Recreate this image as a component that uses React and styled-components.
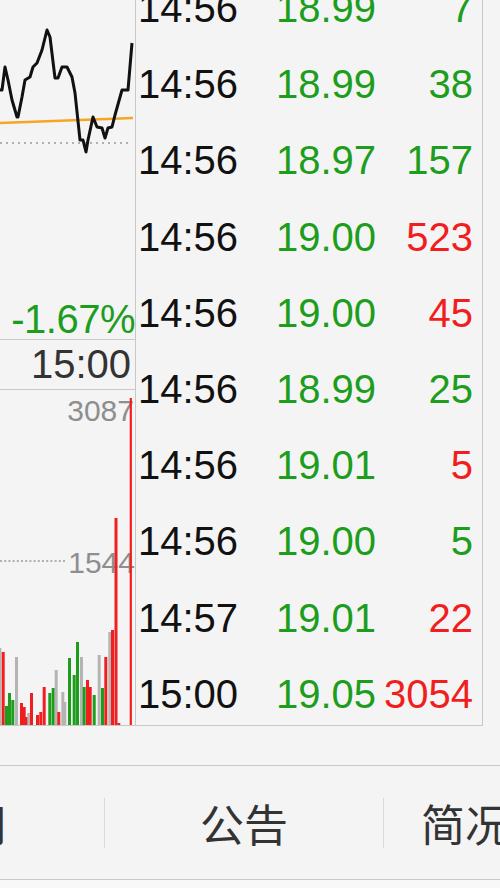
import styled, { createGlobalStyle } from "styled-components";

const pageBg = "#f4f4f4";
const rule = "#c8c8c8";
const green = "#1c9d1c";
const red = "#f01e1e";
const axisGrey = "#8e8e8e";

const GlobalStyle = createGlobalStyle`
  html, body {
    margin: 0;
    padding: 0;
    background: ${pageBg};
    overflow: hidden;
  }
  body {
    font-family: "Liberation Sans", Arial, sans-serif;
  }
`;

const Page = styled.div`
  width: 500px;
  height: 888px;
  overflow: hidden;
  background: ${pageBg};
  display: flex;
  flex-direction: column;
`;

const Quote = styled.div`
  display: flex;
  flex-shrink: 0;
  width: 483px;
  height: 756px;
  margin-top: -30px;
  box-sizing: border-box;
  border-bottom: 1px solid ${rule};
`;

const ChartColumn = styled.div`
  width: 136px;
  flex-shrink: 0;
  box-sizing: border-box;
  border-right: 1px solid ${rule};
  display: flex;
  flex-direction: column;
`;

const PriceChart = styled.svg`
  display: block;
  width: 135px;
  height: 330px;
  flex-shrink: 0;
`;

const PctLabel = styled.div`
  height: 39px;
  line-height: 39px;
  font-size: 40px;
  text-align: right;
  color: ${green};
  white-space: nowrap;
  letter-spacing: -0.5px;
`;

const TimeAxis = styled.div`
  height: 51px;
  box-sizing: border-box;
  border-top: 1px solid ${rule};
  border-bottom: 1px solid ${rule};
  font-size: 40px;
  line-height: 49px;
  color: #333;
  text-align: right;
  padding-right: 4px;
`;

const VolumeChart = styled.svg`
  display: block;
  width: 135px;
  flex: 1;
`;

const TradeList = styled.div`
  flex: 1;
  box-sizing: border-box;
  border-right: 1px solid ${rule};
  overflow: hidden;
`;

const TradeRow = styled.div`
  height: 76.2px;
  display: grid;
  grid-template-columns: 138px 1fr auto;
  align-items: center;
  padding: 0 9px 0 2px;
  font-size: 40px;
  line-height: 1;
`;

const Time = styled.span`
  color: #111;
`;

const Price = styled.span`
  color: ${green};
`;

const Volume = styled.span`
  text-align: right;
  color: ${(p) => (p.$up ? red : green)};
`;

const TabBar = styled.div`
  display: flex;
  align-items: center;
  flex-shrink: 0;
  margin-top: 39px;
  margin-left: -179px;
  height: 115px;
  box-sizing: border-box;
  border-top: 1px solid ${rule};
  border-bottom: 1px solid ${rule};
  font-family: "Noto Sans CJK SC", "Liberation Sans", sans-serif;
  font-size: 44px;
  color: #333;
`;

const Tab = styled.div`
  width: ${(p) => p.$width || 278}px;
  flex-shrink: 0;
  display: flex;
  align-items: center;
  justify-content: ${(p) => (p.$start ? "flex-start" : "center")};
  padding-left: ${(p) => (p.$start ? "37px" : "0")};
  box-sizing: border-box;
  white-space: nowrap;
`;

const TabDivider = styled.div`
  width: 1px;
  height: 50px;
  flex-shrink: 0;
  background: #dadada;
`;

const Footer = styled.div`
  flex: 1;
  background: #f8f8f8;
`;

const pricePoints = [
  [0, 120], [2, 120], [5, 97], [8, 110], [12, 130], [17, 147], [18, 147],
  [22, 127], [25, 110], [30, 107], [33, 97], [37, 93], [42, 80], [47, 60],
  [50, 67], [55, 108], [58, 108], [62, 97], [67, 97], [72, 107], [75, 123],
  [80, 170], [83, 170], [86, 182], [88, 170], [93, 147], [97, 157],
  [102, 158], [105, 168], [108, 158], [112, 157], [115, 145], [122, 120],
  [128, 120], [132, 73],
];

// x, top of bar (page y), colour key, optional width
const volumeBars = [
  [0, 648, "k", 1.3], [1.7, 652, "r"], [5, 706, "g"], [8, 693, "g"],
  [11.3, 700, "g"], [15, 657, "k"], [20, 703, "r"], [22.7, 707, "r"],
  [25, 717, "r"], [27.3, 713, "k"], [30, 693, "r"], [36, 715, "r"],
  [39.3, 712, "r"], [42.7, 687, "r"], [48.3, 693, "g"], [51.7, 688, "g"],
  [54.7, 670, "k"], [57.3, 712, "r"], [61.3, 692, "k"], [63.3, 702, "k"],
  [68, 658, "g"], [72.7, 675, "g"], [76, 642, "g"], [80, 657, "k"],
  [82.7, 687, "g"], [86, 680, "r"], [88.7, 687, "r"], [92.7, 695, "g"],
  [97.7, 655, "k"], [101, 688, "g"], [104.3, 657, "r"], [108.3, 632, "k"],
  [111, 630, "r"], [114.5, 518, "r"], [117.3, 723, "r"], [129.7, 398, "r", 2.2],
];

const barColour = { r: red, g: green, k: "#b4b4b4" };

const trades = [
  ["14:56", "18.99", "7", false],
  ["14:56", "18.99", "38", false],
  ["14:56", "18.97", "157", false],
  ["14:56", "19.00", "523", true],
  ["14:56", "19.00", "45", true],
  ["14:56", "18.99", "25", false],
  ["14:56", "19.01", "5", true],
  ["14:56", "19.00", "5", false],
  ["14:57", "19.01", "22", true],
  ["15:00", "19.05", "3054", true],
];

function App() {
  return (
    <Page>
      <GlobalStyle />
      <Quote>
        <ChartColumn>
          <PriceChart viewBox="0 0 135 330">
            <line x1="0" y1="173" x2="132" y2="173" stroke="#b0b0b0" strokeWidth="2" strokeDasharray="2 4" />
            <line x1="0" y1="153" x2="133" y2="148" stroke="#f5a623" strokeWidth="2.4" />
            <polyline
              points={pricePoints.map((p) => p.join(",")).join(" ")}
              fill="none"
              stroke="#111"
              strokeWidth="3"
              strokeLinejoin="round"
            />
          </PriceChart>
          <PctLabel>-1.67%</PctLabel>
          <TimeAxis>15:00</TimeAxis>
          <VolumeChart viewBox="0 0 135 335" preserveAspectRatio="none">
            <text x="134" y="31" textAnchor="end" fontSize="30" fill={axisGrey} fontFamily="Liberation Sans, Arial, sans-serif">
              3087
            </text>
            <line x1="0" y1="171" x2="65" y2="171" stroke="#b0b0b0" strokeWidth="2" strokeDasharray="2 2.2" />
            <text x="135" y="183" textAnchor="end" fontSize="30" fill={axisGrey} fontFamily="Liberation Sans, Arial, sans-serif">
              1544
            </text>
            {volumeBars.map(([x, top, c, w], i) => (
              <rect key={i} x={x} y={top - 390} width={w || 3} height={725 - top} fill={barColour[c]} />
            ))}
          </VolumeChart>
        </ChartColumn>
        <TradeList>
          {trades.map(([t, p, v, up], i) => (
            <TradeRow key={i}>
              <Time>{t}</Time>
              <Price>{p}</Price>
              <Volume $up={up}>{v}</Volume>
            </TradeRow>
          ))}
        </TradeList>
      </Quote>
      <TabBar>
        <Tab $width={283}>新闻</Tab>
        <TabDivider />
        <Tab>公告</Tab>
        <TabDivider />
        <Tab $start>简况</Tab>
      </TabBar>
      <Footer />
    </Page>
  );
}

export default App;
